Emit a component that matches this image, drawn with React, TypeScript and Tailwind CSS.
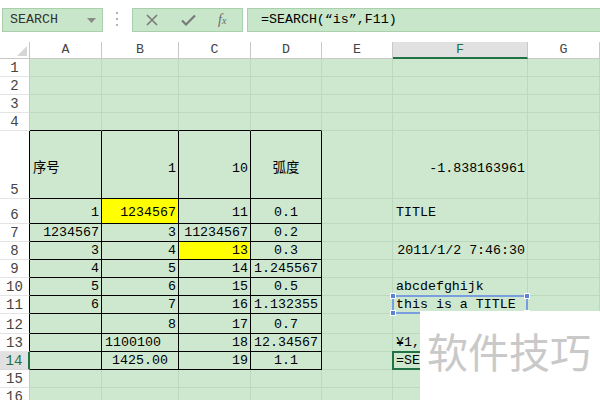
import clsx from 'clsx';

type Cell = { t?: string; a?: 'l' | 'r' | 'c'; y?: boolean };

interface RowDef {
    n: number;
    h: string;
    v?: string;
    cells: Cell[];
}

const cols = ['A', 'B', 'C', 'D', 'E', 'F', 'G'];

const rows: RowDef[] = [
    { n: 1, h: 'h-[18px]', cells: [] },
    { n: 2, h: 'h-[18px]', cells: [] },
    { n: 3, h: 'h-[18px]', cells: [] },
    { n: 4, h: 'h-[18px]', cells: [] },
    {
        n: 5,
        h: 'h-[68px]',
        v: 'items-center pt-[9px]',
        cells: [{ t: '序号', a: 'l' }, { t: '1' }, { t: '10' }, { t: '弧度', a: 'c' }, {}, { t: '-1.838163961' }],
    },
    {
        n: 6,
        h: 'h-[25px]',
        v: 'items-center pt-[4px]',
        cells: [{ t: '1' }, { t: '1234567', y: true }, { t: '11' }, { t: '0.1', a: 'c' }, {}, { t: 'TITLE', a: 'l' }],
    },
    { n: 7, h: 'h-[18px]', cells: [{ t: '1234567' }, { t: '3' }, { t: '11234567' }, { t: '0.2', a: 'c' }] },
    {
        n: 8,
        h: 'h-[18px]',
        cells: [{ t: '3' }, { t: '4' }, { t: '13', y: true }, { t: '0.3', a: 'c' }, {}, { t: '2011/1/2 7:46:30' }],
    },
    { n: 9, h: 'h-[18px]', cells: [{ t: '4' }, { t: '5' }, { t: '14' }, { t: '1.245567', a: 'c' }] },
    {
        n: 10,
        h: 'h-[18px]',
        cells: [{ t: '5' }, { t: '6' }, { t: '15' }, { t: '0.5', a: 'c' }, {}, { t: 'abcdefghijk', a: 'l' }],
    },
    {
        n: 11,
        h: 'h-[18px]',
        cells: [{ t: '6' }, { t: '7' }, { t: '16' }, { t: '1.132355', a: 'c' }, {}, { t: 'this is a TITLE', a: 'l' }],
    },
    { n: 12, h: 'h-[20px]', cells: [{}, { t: '8' }, { t: '17' }, { t: '0.7', a: 'c' }] },
    {
        n: 13,
        h: 'h-[18px]',
        cells: [{}, { t: '1100100', a: 'l' }, { t: '18' }, { t: '12.34567', a: 'c' }, {}, { t: '¥1,425.00', a: 'l' }],
    },
    {
        n: 14,
        h: 'h-[18px]',
        cells: [{}, { t: '1425.00', a: 'c' }, { t: '19' }, { t: '1.1', a: 'c' }, {}, { t: '=SEARCH(“is”,F11)', a: 'l' }],
    },
    { n: 15, h: 'h-[18px]', cells: [] },
    { n: 16, h: 'h-[18px]', cells: [] },
];

const inBox = (n: number) => n >= 5 && n <= 14;

const Handle = ({ pos }: { pos: string }) => (
    <span className={clsx('absolute z-20 size-[6px] border border-white bg-[#5b84d6]', pos)} />
);

const Toolbar = () => (
    <div className="flex h-[42px] items-start bg-white pt-[8px]">
        <div className="ml-[2px] flex h-[24px] w-[101px] items-center justify-between border border-[#a9cfab] bg-[#c8e6c9] pl-[7px] pr-[6px]">
            <span className="text-[13.3px] text-[#333]">SEARCH</span>
            <svg width="9" height="5" viewBox="0 0 9 5">
                <path d="M0 0h9L4.5 5z" fill="#8a8a8a" />
            </svg>
        </div>
        <div className="ml-[13px] mt-[4px] flex flex-col gap-[4px]">
            <span className="size-[2px] bg-[#b5b5b5]" />
            <span className="size-[2px] bg-[#b5b5b5]" />
            <span className="size-[2px] bg-[#b5b5b5]" />
        </div>
        <div className="ml-[14px] flex h-[24px] w-[111px] items-center border border-[#a9cfab] bg-[#c8e6c9] pl-[13px]">
            <svg width="12" height="12" viewBox="0 0 12 12">
                <path d="M1 1l10 10M11 1L1 11" stroke="#7a7a7a" strokeWidth="1.6" />
            </svg>
            <svg width="15" height="12" viewBox="0 0 15 12" className="ml-[23px]">
                <path d="M1 6.5l4 4L14 1.5" stroke="#7a7a7a" strokeWidth="2.2" fill="none" />
            </svg>
            <span className="ml-[22px] font-['Liberation_Serif',serif] text-[14px] italic leading-none text-[#6a6a6a]">
                f<span className="text-[10px]">x</span>
            </span>
        </div>
        <div className="ml-[4px] flex h-[24px] flex-1 items-center border border-r-0 border-[#a9cfab] bg-[#c8e6c9] pl-[13px]">
            <span className="text-[13.3px] text-black">=SEARCH(“is”,F11)</span>
        </div>
    </div>
);

const ColumnHeader = () => (
    <>
        <div className="relative h-[17px] border-b border-r border-[#c8c8c8] bg-white">
            <svg width="10" height="10" viewBox="0 0 10 10" className="absolute bottom-[2px] right-[2px]">
                <path d="M10 0v10H0z" fill="#d6d6d6" />
            </svg>
        </div>
        {cols.map((c) => (
            <div
                key={c}
                className={clsx(
                    'flex h-[17px] items-center justify-center border-r text-[13.3px] leading-none',
                    c === 'F'
                        ? 'border-b-2 border-r-[#c8c8c8] border-b-[#217346] bg-[#e1e1e1] text-[#217346]'
                        : 'border-b border-[#c8c8c8] bg-white text-[#444]',
                )}
            >
                {c}
            </div>
        ))}
    </>
);

export default function App() {
    return (
        <div className="relative h-[400px] w-[600px] overflow-hidden bg-white font-['Liberation_Mono','Noto_Sans_CJK_SC',monospace]">
            <Toolbar />
            <div className="grid grid-cols-[30px_72px_77px_72px_71px_71px_135px_72px]">
                <ColumnHeader />
                {rows.map((row) => (
                    <div key={row.n} className="contents">
                        <div
                            className={clsx(
                                'flex items-end justify-center border-b border-r pb-[1px] text-[14px] leading-none',
                                row.h,
                                row.n === 14
                                    ? 'border-r-2 border-r-[#217346] border-b-[#dadada] bg-[#e1e1e1] text-[#217346]'
                                    : 'border-b-[#e4e4e4] bg-white text-[#444]',
                                row.n !== 14 && (inBox(row.n) ? 'border-r-black' : 'border-r-[#c8c8c8]'),
                            )}
                        >
                            {row.n}
                        </div>
                        {cols.map((c, ci) => {
                            const cell = row.cells[ci] ?? {};
                            const boxed = ci < 4;
                            const rightBlack = boxed && inBox(row.n);
                            const bottomBlack = boxed && (inBox(row.n) || row.n === 4);
                            const align = cell.a ?? 'r';
                            return (
                                <div
                                    key={c}
                                    className={clsx(
                                        'relative flex border-b border-r text-[13.3px] leading-none text-black',
                                        row.h,
                                        row.v ?? 'items-end pb-[2px]',
                                        align === 'l' && 'justify-start pl-[3px]',
                                        align === 'r' && 'justify-end pr-[2px]',
                                        align === 'c' && 'justify-center',
                                        cell.y ? 'bg-[#ffff00]' : 'bg-[#cde8cf]',
                                        rightBlack ? 'border-r-black' : 'border-r-[#bcd8be]',
                                        bottomBlack ? 'border-b-black' : 'border-b-[#bcd8be]',
                                    )}
                                >
                                    <span className="whitespace-nowrap">{cell.t}</span>
                                    {row.n === 12 && c === 'D' && (
                                        <span className="absolute right-[-2px] top-0 h-full w-[1px] bg-[#e0503c]" />
                                    )}
                                    {row.n === 11 && c === 'F' && (
                                        <>
                                            <span className="absolute inset-[-1px] z-10 border-2 border-[#7a9de0]" />
                                            <Handle pos="left-[-3px] top-[-3px]" />
                                            <Handle pos="right-[-3px] top-[-3px]" />
                                            <Handle pos="bottom-[-3px] left-[-3px]" />
                                            <Handle pos="bottom-[-3px] right-[-3px]" />
                                        </>
                                    )}
                                    {row.n === 14 && c === 'F' && (
                                        <span className="absolute inset-[-1px] z-10 border-2 border-[#217346]" />
                                    )}
                                </div>
                            );
                        })}
                    </div>
                ))}
            </div>
            <div className="absolute left-[420px] top-[311px] z-30 h-[89px] w-[180px] bg-white pl-[7px] pt-[19px]">
                <span className="font-['Noto_Sans_CJK_SC',sans-serif] text-[41px] leading-none text-[#c9c9c9]">
                    软件技巧
                </span>
            </div>
        </div>
    );
}
